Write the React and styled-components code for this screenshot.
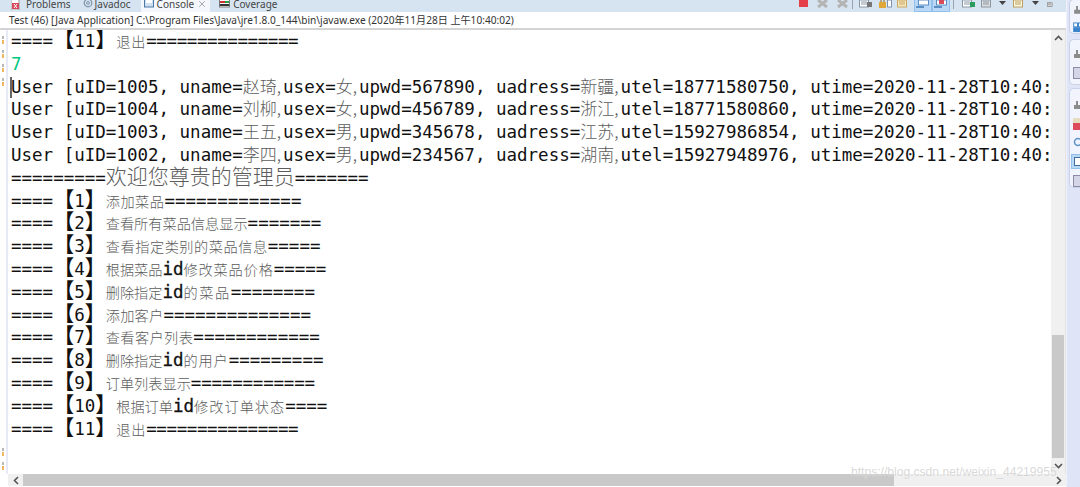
import styled, { createGlobalStyle } from "styled-components";
import { X } from "lucide-react";

const Global = createGlobalStyle`
  html, body { margin: 0; padding: 0; background: #fff; }
`;

const Window = styled.div`
  position: relative;
  width: 1080px;
  height: 487px;
  display: flex;
  overflow: hidden;
  background: #dfe5f6;
`;
const Main = styled.div`
  width: 1066px;
  display: flex;
  flex-direction: column;
  background: #fff;
`;
const TabBar = styled.div`
  height: 12px;
  display: flex;
  align-items: flex-end;
  padding-left: 8px;
  background: #d6e4f2;
  overflow: hidden;
`;
const Tab = styled.div`
  height: 16px;
  display: flex;
  align-items: center;
  gap: ${(p) => p.$iconGap}px;
  padding: 0 3px;
  margin-right: ${(p) => p.$gap}px;
  background: ${(p) => (p.$active ? "#f4f8fc" : "transparent")};
  font: 10px "Noto Sans", sans-serif;
  color: #444;
  svg { flex: none; }
`;
const Toolbar = styled.div`
  margin-left: auto;
  height: 12px;
  display: flex;
  align-items: flex-start;
  padding-right: 12px;
`;
const ToolSlot = styled.div`
  width: ${(p) => p.$w}px;
  height: 12px;
  margin-left: ${(p) => p.$ml || 0}px;
  display: flex;
  justify-content: center;
  background: ${(p) => (p.$on ? "#b8d8f6" : "transparent")};
  border: ${(p) => (p.$on ? "1px solid #93c0ea" : "0")};
  border-top: 0;
  box-sizing: border-box;
`;
const ToolSep = styled.div`
  width: 1px;
  height: 9px;
  margin-left: ${(p) => p.$ml}px;
  background: #98a2ac;
`;
const TitleRow = styled.div`
  height: 15px;
  padding: 1px 0 0 9px;
  font: 10.1px/15px "Noto Sans", "Noto Sans CJK SC", sans-serif;
  color: #333;
  white-space: nowrap;
  border-bottom: 2px solid #d4d4d4;
`;
const Body = styled.div`
  flex: 1;
  min-height: 0;
  display: flex;
`;
const Gutter = styled.div`
  width: 8px;
  display: flex;
  flex-direction: column;
  justify-content: space-between;
  padding: 6px 0 4px 2px;
  box-sizing: border-box;
  background: linear-gradient(90deg, #fff 0 6px, #e6e9f6 6px);
`;
const MarkGroup = styled.div`
  display: flex;
  flex-direction: column;
  gap: 6px;
`;
const Mark = styled.div`
  width: 2px;
  height: 8px;
  background: linear-gradient(#b9b9b9 0 3px, transparent 3px 4px, #f0b560 4px);
`;
const Output = styled.div`
  position: relative;
  flex: 1;
  min-width: 0;
  padding: 0 0 0 3px;
  overflow: hidden;
  background: #fff;
`;
const Line = styled.div`
  height: 22.8px;
  white-space: pre;
  font: 17.5px/22.8px "DejaVu Sans Mono", monospace;
  color: ${(p) => p.$color || "#111"};
`;
const Cursor = styled.div`
  position: absolute;
  left: 2px;
  top: 47px;
  width: 1.5px;
  height: 21px;
  background: #666;
`;
const Cn = styled.span`
  font: 300 ${(p) => p.$size}px/0 "Noto Sans CJK SC", sans-serif;
  color: #5c5c5c;
  letter-spacing: ${(p) => p.$track || 0}px;
  margin-right: ${(p) => p.$pad || 0}px;
`;
const Bracket = styled.span`
  font: 500 21px/0 "Noto Sans CJK SC", sans-serif;
  color: #111;
`;
const Id = styled.span`
  -webkit-text-stroke: 0.3px #111;
`;
const Tail = styled.span`
  letter-spacing: ${(p) => p.$squeeze || 0}px;
`;
const VScroll = styled.div`
  width: 15px;
  display: flex;
  flex-direction: column;
  align-items: center;
  background: #f0f0f0;
  border-right: 1px solid #e4e4e4;
  box-sizing: border-box;
`;
const Arrow = styled.div`
  height: 16px;
  flex: none;
  display: flex;
  align-items: center;
  justify-content: center;
  color: #555;
`;
const VTrack = styled.div`
  flex: 1;
  width: 100%;
  display: flex;
  flex-direction: column;
  justify-content: flex-end;
  padding: 0 1px;
  box-sizing: border-box;
`;
const VThumb = styled.div`
  height: 123px;
  background: #c9c9c9;
`;
const HScroll = styled.div`
  height: 12px;
  margin: 0 0 1px 8px;
  display: flex;
  align-items: center;
  background: #f0f0f0;
  color: #555;
`;
const HArrow = styled.div`
  width: 15px;
  flex: none;
  display: flex;
  justify-content: center;
`;
const HTrack = styled.div`
  flex: 1;
  height: 100%;
`;
const HThumb = styled.div`
  width: 871px;
  height: 100%;
  background: #c9c9c9;
`;
const Trim = styled.div`
  flex: 1;
  display: flex;
  flex-direction: column;
  padding-left: 2px;
  background: #dfe5f6;
  border-left: 1px solid #eef1fa;
`;
const TrimPanel = styled.div`
  height: ${(p) => p.$h}px;
  margin-top: ${(p) => p.$mt}px;
  padding: ${(p) => p.$pt}px 0 0 3px;
  box-sizing: border-box;
  display: flex;
  flex-direction: column;
  gap: ${(p) => p.$gap}px;
  background: #f1f4fc;
  border: 1px solid #c9d2e8;
  border-right: 0;
  border-radius: 5px 0 0 5px;
`;
const Watermark = styled.div`
  position: absolute;
  left: 851px;
  top: 464px;
  font: 12.1px/16px "Liberation Sans", sans-serif;
  color: rgba(190, 190, 190, 0.6);
  text-shadow: 0 0 1px rgba(255, 255, 255, 0.8);
  white-space: nowrap;
`;

const ProblemsIcon = () => (
  <svg width="10" height="12" viewBox="0 0 10 12">
    <rect x="0" y="0" width="8" height="12" fill="#fff" stroke="#999" />
    <rect x="1" y="5" width="7" height="6" fill="#d8455a" />
    <path d="M3 6l3 4M6 6l-3 4" stroke="#fff" />
  </svg>
);
const JavadocIcon = () => (
  <svg width="10" height="12" viewBox="0 0 10 12">
    <circle cx="5" cy="5" r="3.8" fill="none" stroke="#7d93a8" strokeWidth="1.2" />
    <circle cx="5" cy="5" r="1.4" fill="none" stroke="#7d93a8" />
  </svg>
);
const ConsoleIcon = () => (
  <svg width="10" height="12" viewBox="0 0 10 12">
    <rect x="0.5" y="0" width="9" height="9" fill="#cfe0f0" stroke="#4b7aa8" />
    <rect x="2" y="2" width="6" height="3" fill="#fff" />
  </svg>
);
const CoverageIcon = () => (
  <svg width="11" height="12" viewBox="0 0 11 12">
    <rect x="0.5" y="1" width="10" height="8" fill="#fff" stroke="#777" />
    <rect x="1" y="3" width="5" height="2" fill="#c33" />
    <rect x="6" y="3" width="4" height="2" fill="#2a9d3c" />
    <rect x="1" y="6" width="9" height="2" fill="#333" />
  </svg>
);
const Stop = () => (
  <svg width="9" height="12"><rect width="9" height="7" fill="#e5404a" /></svg>
);
const GreyX = ({ w = 11 }) => (
  <svg width={w} height="12" viewBox="0 0 11 12">
    <path d="M1 0l9 7M10 0L1 7" stroke="#b4b4b4" strokeWidth="3" />
  </svg>
);
const Doc = ({ fill = "#fff", line = "#8a97a5", accent }) => (
  <svg width="13" height="12" viewBox="0 0 13 12">
    <rect x="0.5" y="0" width="9" height="7" fill={fill} stroke={line} />
    <path d="M2 2h6M2 4h6" stroke={line} />
    {accent && <rect x="8" y="2" width="5" height="5" fill={accent} />}
  </svg>
);
const Lock = () => (
  <svg width="13" height="12" viewBox="0 0 13 12">
    <rect x="0" y="2" width="7" height="6" fill="#e0a83a" />
    <path d="M2 2V0M5 2V0" stroke="#8a6a20" />
    <rect x="8.5" y="0" width="4" height="7" fill="#fff" stroke="#7f93b0" />
  </svg>
);
const Pin = ({ accent }) => (
  <svg width="14" height="12" viewBox="0 0 14 12">
    <rect x="2.5" y="0" width="10" height="5" fill="#fff" stroke="#5b8ec2" />
    <path d="M0 7h8" stroke="#5b8ec2" strokeWidth="2" />
    {accent && <rect x="5" y="0" width="5" height="4" fill="#d84a5a" />}
  </svg>
);
const Down = () => (
  <svg width="7" height="12"><path d="M0 1h7L3.5 5z" fill="#444" /></svg>
);
const TrimDoc = () => (
  <svg width="10" height="12" viewBox="0 0 10 12">
    <path d="M3 1h2v4h3v4H1V5h2z" fill="#8b8b8b" />
  </svg>
);
const TrimGrid = () => (
  <svg width="10" height="12" viewBox="0 0 10 12">
    <rect x="0.5" y="1" width="4" height="4" fill="#fff" stroke="#3c83c9" />
    <rect x="5.5" y="1" width="4" height="4" fill="#fff" stroke="#3c83c9" />
    <rect x="0.5" y="6" width="4" height="4" fill="#3c83c9" stroke="#3c83c9" />
    <rect x="5.5" y="6" width="4" height="4" fill="#3c83c9" stroke="#3c83c9" />
  </svg>
);
const TrimSheet = () => (
  <svg width="10" height="12" viewBox="0 0 10 12">
    <rect x="0.5" y="0.5" width="9" height="11" fill="#d4d6e8" stroke="#8b8ba8" />
  </svg>
);
const TrimProblems = () => (
  <svg width="10" height="12" viewBox="0 0 10 12">
    <rect x="0" y="0" width="10" height="5" fill="#e6dcc0" />
    <rect x="0" y="5" width="10" height="7" fill="#dc4a5c" />
  </svg>
);
const TrimAt = () => (
  <svg width="10" height="12" viewBox="0 0 10 12">
    <circle cx="5" cy="6" r="3.5" fill="none" stroke="#5c93c8" strokeWidth="1.5" />
  </svg>
);
const ActiveConsole = styled.div`
  width: 12px;
  height: 15px;
  margin-left: -2px;
  display: flex;
  align-items: center;
  justify-content: flex-end;
  background: #b8d8f6;
  border: 1px solid #93c0ea;
  box-sizing: border-box;
`;
const TrimConsole = () => (
  <ActiveConsole>
    <svg width="8" height="9" viewBox="0 0 8 9">
      <rect x="0.5" y="0.5" width="7" height="8" fill="#fff" stroke="#3e6c9c" />
    </svg>
  </ActiveConsole>
);

const Rule = ({ n, squeeze }) => <Tail $squeeze={squeeze}>{"=".repeat(n)}</Tail>;

const users = [
  ["1005", "赵琦", "女", "567890", "新疆", "18771580750"],
  ["1004", "刘柳", "女", "456789", "浙江", "18771580860"],
  ["1003", "王五", "男", "345678", "江苏", "15927986854"],
  ["1002", "李四", "男", "234567", "湖南", "15927948976"],
];

// number, label parts, length of the trailing rule, extra width of the label, rule squeeze
const menu = [
  ["1", ["添加菜品"], 13, 2],
  ["2", ["查看所有菜品信息显示"], 7, 0],
  ["3", ["查看指定类别的菜品信息"], 5, 6],
  ["4", ["根据菜品", "id", "修改菜品价格"], 5, 5],
  ["5", ["删除指定", "id", "的菜品"], 8, 4.5],
  ["6", ["添加客户"], 14, 1],
  ["7", ["查看客户列表"], 12, 2.5],
  ["8", ["删除指定", "id", "的用户"], 9, 2.5],
  ["9", ["订单列表显示"], 12, 0, -0.2],
  ["10", ["根据订单", "id", "修改订单状态"], 4, 6],
  ["11", ["退出"], 15, 1.6, -0.4],
];

function MenuLine({ num, parts, tail, extra, squeeze }) {
  const last = parts.length - 1;
  return (
    <Line>
      ====<Bracket>【</Bracket>{num}<Bracket>】</Bracket>
      {parts.map((p, i) =>
        p === "id" ? (
          <Id key={i}>id</Id>
        ) : (
          <Cn key={i} $size={14.2} $track={i === last ? extra / p.length : 0}>{p}</Cn>
        )
      )}
      <Rule n={tail} squeeze={squeeze} />
    </Line>
  );
}

export default function App() {
  return (
    <Window>
      <Global />
      <Main>
        <TabBar>
          <Tab $gap={6} $iconGap={5}><ProblemsIcon />Problems</Tab>
          <Tab $gap={7} $iconGap={2}><JavadocIcon />Javadoc</Tab>
          <Tab $active $gap={6} $iconGap={3}><ConsoleIcon />Console<X size={10} color="#999" /></Tab>
          <Tab $gap={0} $iconGap={3}><CoverageIcon />Coverage</Tab>
          <Toolbar>
            <ToolSlot $w={9}><Stop /></ToolSlot>
            <ToolSlot $w={11} $ml={9}><GreyX /></ToolSlot>
            <ToolSlot $w={11} $ml={9}><GreyX /></ToolSlot>
            <ToolSep $ml={4} />
            <ToolSlot $w={13} $ml={6}><Doc accent="#777" /></ToolSlot>
            <ToolSlot $w={13} $ml={7}><Lock /></ToolSlot>
            <ToolSlot $w={13} $ml={5}><Doc fill="#f5e6bf" line="#c9a860" /></ToolSlot>
            <ToolSlot $w={18} $ml={4} $on><Pin /></ToolSlot>
            <ToolSlot $w={18} $on><Pin accent /></ToolSlot>
            <ToolSep $ml={3} />
            <ToolSlot $w={13} $ml={8}><Doc accent="#2a9d5c" /></ToolSlot>
            <ToolSlot $w={13} $ml={6}><Doc fill="#ddd" /></ToolSlot>
            <ToolSlot $w={7} $ml={5}><Down /></ToolSlot>
            <ToolSlot $w={13} $ml={7}><Doc fill="#fff8e0" line="#b8a060" /></ToolSlot>
            <ToolSlot $w={7} $ml={6}><Down /></ToolSlot>
            <ToolSlot $w={7} $ml={8}><Doc fill="#eee" line="#666" /></ToolSlot>
          </Toolbar>
        </TabBar>
        <TitleRow>
          Test (46) [Java Application] C:\Program Files\Java\jre1.8.0_144\bin\javaw.exe (2020年11月28日 上午10:40:02)
        </TitleRow>
        <Body>
          <Gutter>
            <MarkGroup><Mark /><Mark /><Mark /><Mark /></MarkGroup>
            <MarkGroup><Mark /><Mark /></MarkGroup>
          </Gutter>
          <Output>
            <Cursor />
            <MenuLine num="11" parts={["退出"]} tail={15} extra={1.6} squeeze={-0.4} />
            <Line $color="#00c87d">7</Line>
            {users.map(([id, name, sex, pwd, addr, tel]) => (
              <Line key={id}>
                User [uID={id}, uname=<Cn $size={17} $pad={2}>{name},</Cn>usex=<Cn $size={17} $pad={2}>{sex},</Cn>upwd={pwd}, uadress=<Cn $size={17} $pad={2}>{addr},</Cn>utel={tel}, utime=2020-11-28T10:40:02
              </Line>
            ))}
            <Line>
              <Rule n={9} /><Cn $size={21}>欢迎您尊贵的管理员</Cn><Rule n={7} />
            </Line>
            {menu.map(([num, parts, tail, extra, squeeze]) => (
              <MenuLine key={num} num={num} parts={parts} tail={tail} extra={extra} squeeze={squeeze} />
            ))}
          </Output>
          <VScroll>
            <Arrow>
              <svg width="9" height="6"><path d="M1 5l3.5-3.5L8 5" fill="none" stroke="#555" strokeWidth="1.6" /></svg>
            </Arrow>
            <VTrack><VThumb /></VTrack>
            <Arrow>
              <svg width="9" height="6"><path d="M1 1l3.5 3.5L8 1" fill="none" stroke="#555" strokeWidth="1.6" /></svg>
            </Arrow>
          </VScroll>
        </Body>
        <HScroll>
          <HArrow>
            <svg width="6" height="9"><path d="M5 1L1.5 4.5 5 8" fill="none" stroke="#555" strokeWidth="1.6" /></svg>
          </HArrow>
          <HTrack><HThumb /></HTrack>
          <HArrow>
            <svg width="6" height="9"><path d="M1 1l3.5 3.5L1 8" fill="none" stroke="#555" strokeWidth="1.6" /></svg>
          </HArrow>
        </HScroll>
      </Main>
      <Trim>
        <TrimPanel $h={35} $mt={-1} $pt={5} $gap={5}><TrimDoc /><TrimGrid /></TrimPanel>
        <TrimPanel $h={46} $mt={5} $pt={9} $gap={6}><TrimDoc /><TrimSheet /></TrimPanel>
        <TrimPanel $h={100} $mt={3} $pt={11} $gap={6}><TrimDoc /><TrimProblems /><TrimAt /><TrimConsole /><TrimSheet /></TrimPanel>
      </Trim>
      <Watermark>https://blog.csdn.net/weixin_44219955</Watermark>
    </Window>
  );
}
